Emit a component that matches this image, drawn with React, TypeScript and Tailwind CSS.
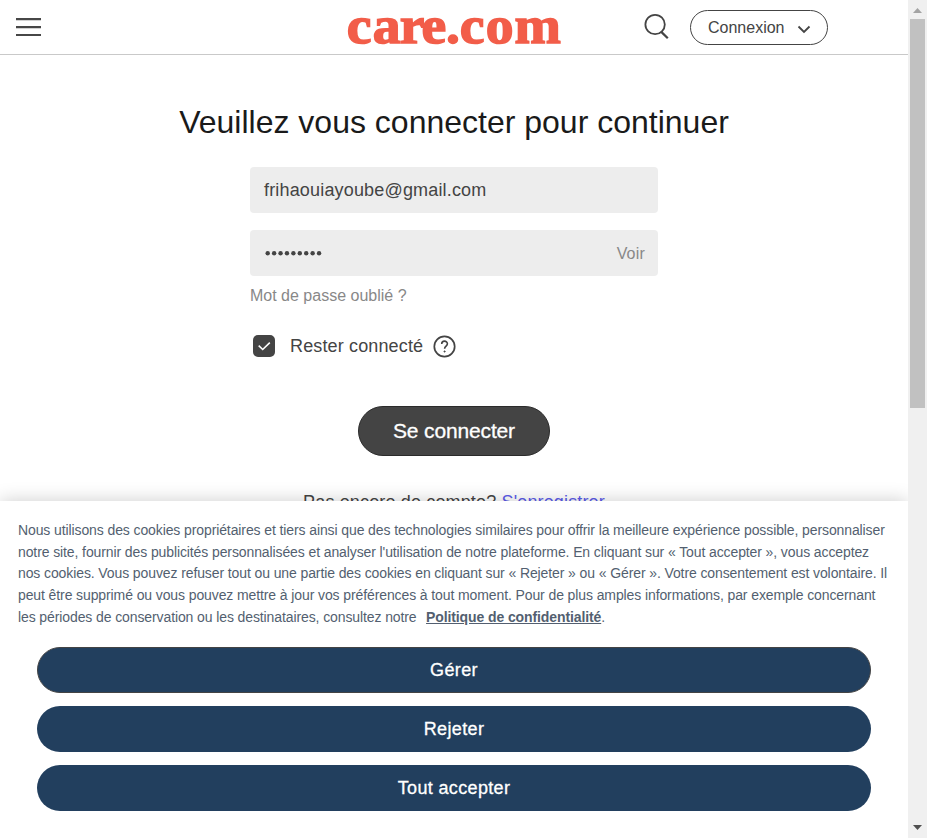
import React from "react";

function Header() {
  return (
    <header className="flex h-[55px] shrink-0 items-start border-b border-[#c9c9c9] bg-white">
      <button aria-label="Menu" className="mt-[18px] ml-4 h-[18px] w-[25px]">
        <svg width="25" height="18" viewBox="0 0 25 18" className="block">
          <path d="M0 1.1H25M0 9.1H25M0 17H25" stroke="#474747" strokeWidth="2.1" />
        </svg>
      </button>
      <svg width="216" height="54" viewBox="0 0 216 54" className="ml-[305px] block overflow-visible" fill="#f25d49">
        <g transform="scale(1.05 1)">
          <text
            y="42.6"
            x="0.8 25.6 51.2 72 95.2 108.4 133 160.6"
            stroke="#f25d49"
            strokeWidth="1.5"
            className="font-['Liberation_Serif',serif] text-[53px] font-bold"
          >
            care.com
          </text>
        </g>
      </svg>
      <svg width="26" height="28" viewBox="0 0 26 28" className="mt-[13px] ml-[81px] block" fill="none" stroke="#444">
        <circle cx="12.1" cy="11.5" r="9.7" strokeWidth="1.8" />
        <path d="M18 18.6L24.8 25.3" strokeWidth="2.2" />
      </svg>
      <button className="mt-[10px] ml-[21px] flex h-[35px] w-[138px] items-center rounded-full border border-[#444] pl-[17px] text-base text-[#444]">
        <span className="w-[77px] text-left">Connexion</span>
        <svg width="14" height="9" viewBox="0 0 14 9" className="mt-[3px] ml-3 block" fill="none" stroke="#444" strokeWidth="1.8">
          <path d="M1.5 1.5L7 7L12.5 1.5" />
        </svg>
      </button>
    </header>
  );
}

function LoginForm() {
  return (
    <main className="flex flex-col items-center">
      <h1 className="mt-[45px] h-11 text-[32px] leading-[44px] whitespace-nowrap text-[#1a1a1a]">
        Veuillez vous connecter pour continuer
      </h1>
      <div className="mt-[23px] flex w-[408px] flex-col text-[#444]">
        <div className="flex h-[46px] items-center rounded bg-[#ededed] px-[14px] text-lg tracking-[0.17px]">
          frihaouiayoube@gmail.com
        </div>
        <div className="mt-[17px] flex h-[46px] items-center justify-between rounded bg-[#ededed] pr-[13px] pl-[15px]">
          <svg width="58" height="6" viewBox="0 0 58 6" fill="#444">
            {[0, 1, 2, 3, 4, 5, 6, 7, 8].map((i) => (
              <circle key={i} cx={2.7 + i * 6.42} cy="3.2" r="2.2" />
            ))}
          </svg>
          <span className="pt-px text-base tracking-[0.2px] text-[#888]">Voir</span>
        </div>
        <a className="mt-2 h-6 text-base leading-6 text-[#888]">Mot de passe oublié ?</a>
        <div className="mt-[26px] flex h-6 items-center">
          <svg width="22" height="22" viewBox="0 0 22 22" className="-mt-px ml-[3px] block">
            <rect width="22" height="22" rx="5" fill="#444" />
            <path d="M5.7 10.7L9.7 14.5L16.8 7.6" fill="none" stroke="#fff" strokeWidth="1.6" />
          </svg>
          <span className="ml-[15px] w-[134px] text-lg tracking-[0.14px] whitespace-nowrap">Rester connecté</span>
          <svg width="23" height="23" viewBox="0 0 23 23" className="ml-[9px] block" fill="none" stroke="#444">
            <circle cx="11.5" cy="11.5" r="10.2" strokeWidth="1.7" />
            <path d="M8.7 9C8.7 5.2 14.4 5.3 14.4 8.8C14.4 11 11.6 11.2 11.6 13.7" strokeWidth="1.6" />
            <circle cx="11.6" cy="16.5" r=".6" fill="#444" />
          </svg>
        </div>
      </div>
      <button className="mt-12 h-[50px] w-48 rounded-full border border-[#2b2b2b] bg-[#444] text-[21px] tracking-[-0.15px] text-white [-webkit-text-stroke:0.3px_#fff]">
        Se connecter
      </button>
      <p className="mt-[34px] h-6 text-lg leading-6 tracking-[0.15px] text-[#444]">
        Pas encore de compte? <a className="text-[#5b5bea]">S'enregistrer</a>
      </p>
    </main>
  );
}

const lines = [
  "Nous utilisons des cookies propriétaires et tiers ainsi que des technologies similaires pour offrir la meilleure expérience possible, personnaliser",
  "notre site, fournir des publicités personnalisées et analyser l'utilisation de notre plateforme. En cliquant sur « Tout accepter », vous acceptez",
  "nos cookies. Vous pouvez refuser tout ou une partie des cookies en cliquant sur « Rejeter » ou « Gérer ». Votre consentement est volontaire. Il",
  "peut être supprimé ou vous pouvez mettre à jour vos préférences à tout moment. Pour de plus amples informations, par exemple concernant",
];

function CookieBanner() {
  return (
    <section className="absolute inset-x-0 top-[501px] bottom-0 bg-white shadow-[0_0_18px_rgba(0,0,0,0.2)]">
      <div className="px-[18px] pt-[19px] text-[14px] leading-[21.7px] tracking-[-0.105px] whitespace-nowrap text-[#535f70]">
        {lines.map((line) => (
          <p key={line}>{line}</p>
        ))}
        <p>
          les périodes de conservation ou les destinataires, consultez notre
          <a className="ml-[9.5px] font-bold underline">Politique de confidentialité</a>.
        </p>
      </div>
      <div className="mx-[37px] mt-[18px] flex flex-col gap-[13px] text-lg tracking-[0.35px] text-white [-webkit-text-stroke:0.3px_#fff]">
        <button className="h-[46px] rounded-full border border-[#444] bg-[#223f5e]">Gérer</button>
        <button className="h-[46px] rounded-full bg-[#223f5e]">Rejeter</button>
        <button className="h-[46px] rounded-full bg-[#223f5e]">Tout accepter</button>
      </div>
    </section>
  );
}

function Scrollbar() {
  return (
    <aside className="flex w-[19px] shrink-0 flex-col items-center bg-[#f0f0f0]">
      <svg width="19" height="19" viewBox="0 0 19 19" className="block">
        <path d="M5 13L9.5 8L14 13Z" fill="#a3a3a3" />
      </svg>
      <div className="mr-px h-[389px] w-[15px] bg-[#c1c1c1]" />
      <svg width="19" height="19" viewBox="0 0 19 19" className="mt-auto block">
        <path d="M5 6L9.5 11L14 6Z" fill="#505050" />
      </svg>
    </aside>
  );
}

export default function App() {
  return (
    <div className="flex h-[838px] w-[927px] overflow-hidden bg-white font-['Liberation_Sans',Arial,sans-serif]">
      <div className="relative flex w-[908px] flex-col overflow-hidden">
        <Header />
        <LoginForm />
        <CookieBanner />
      </div>
      <Scrollbar />
    </div>
  );
}
